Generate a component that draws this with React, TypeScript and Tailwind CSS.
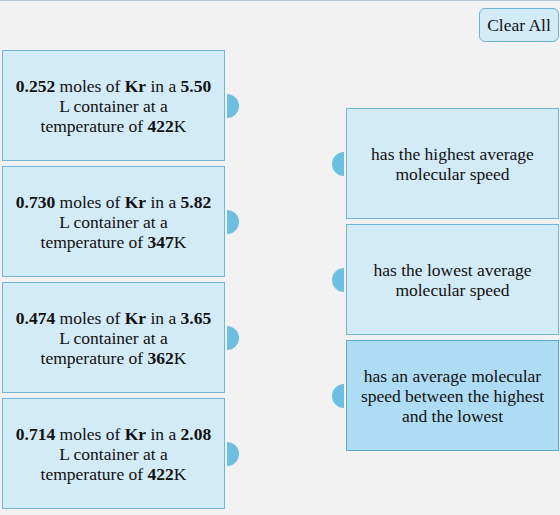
import React from "react";

type Sample = { moles: string; volume: string; temp: string };

const samples: Sample[] = [
  { moles: "0.252", volume: "5.50", temp: "422" },
  { moles: "0.730", volume: "5.82", temp: "347" },
  { moles: "0.474", volume: "3.65", temp: "362" },
  { moles: "0.714", volume: "2.08", temp: "422" },
];

const answers: { lines: string[]; active?: boolean }[] = [
  { lines: ["has the highest average", "molecular speed"] },
  { lines: ["has the lowest average", "molecular speed"] },
  {
    lines: ["has an average molecular", "speed between the highest", "and the lowest"],
    active: true,
  },
];

function Knob({ side }: { side: "left" | "right" }) {
  return (
    <div
      className={
        side === "right"
          ? "w-[12px] h-[24px] rounded-r-full bg-[#6cbfe1] ml-[2px]"
          : "w-[12px] h-[24px] rounded-l-full bg-[#6cbfe1] mr-[2px]"
      }
    />
  );
}

export default function App() {
  return (
    <div
      className="w-[560px] h-[515px] bg-[#f2f2f2] border-t border-[#b9c5d2] flex text-[#111] text-[17.5px] leading-[20px] overflow-hidden"
      style={{ fontFamily: '"Liberation Serif", "Times New Roman", serif' }}
    >
      {/* draggable source cards */}
      <div className="ml-[2px] mt-[49px] flex flex-col gap-[5px]">
        {samples.map((s, i) => (
          <div key={i} className="flex items-center">
            <div className="w-[223px] h-[111px] bg-[#d3eaf7] border border-[#74b4d6] flex items-center justify-center text-center px-1">
              <p>
                <b>{s.moles}</b> moles of <b>Kr</b> in a <b>{s.volume}</b>
                <br />L container at a<br />
                temperature of <b>{s.temp}</b>K
              </p>
            </div>
            <Knob side="right" />
          </div>
        ))}
      </div>

      {/* target column */}
      <div className="ml-auto mr-[1px] flex flex-col items-end">
        <button className="mt-[7px] w-[80px] h-[34px] rounded-[6px] bg-[#d3eaf7] border border-[#6fb0d3] text-[17.5px] text-[#111]">
          Clear All
        </button>
        <div className="mt-[66px] flex flex-col gap-[5px]">
          {answers.map((a, i) => (
            <div key={i} className="flex items-center">
              <Knob side="left" />
              <div
                className={
                  a.active
                    ? "w-[213px] h-[111px] bg-[#aedcf4] border border-[#5fa9cf] flex items-center justify-center text-center"
                    : "w-[213px] h-[111px] bg-[#d3eaf7] border border-[#74b4d6] flex items-center justify-center text-center"
                }
              >
                <p>
                  {a.lines.map((l, j) => (
                    <React.Fragment key={j}>
                      {j > 0 && <br />}
                      {l}
                    </React.Fragment>
                  ))}
                </p>
              </div>
            </div>
          ))}
        </div>
      </div>
    </div>
  );
}
